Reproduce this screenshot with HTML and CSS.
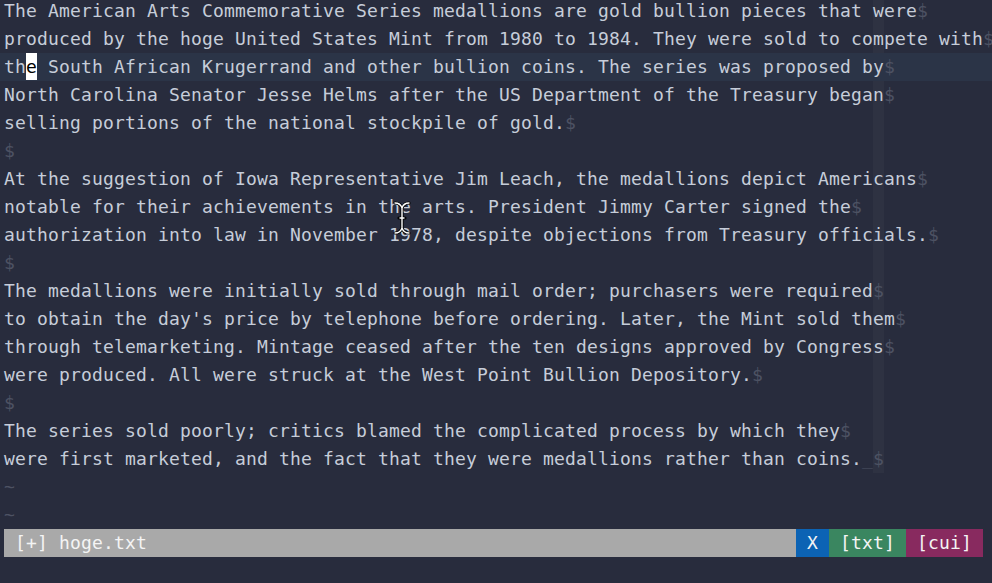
FILE: index.html
```html
<!DOCTYPE html>
<html>
<head>
<meta charset="utf-8">
<link rel="stylesheet" href="styles.css">
</head>
<body>
<div class="editor">
  <div class="buffer">
    <div class="line">The American Arts Commemorative Series medallions are gold bullion pieces that were<span class="nt">$</span></div>
    <div class="line">produced by the hoge United States Mint from 1980 to 1984. They were sold to compete with<span class="nt">$</span></div>
    <div class="line cursorline">th<span class="cursor">e</span> South African Krugerrand and other bullion coins. The series was proposed by<span class="nt">$</span></div>
    <div class="line">North Carolina Senator Jesse Helms after the US Department of the Treasury began<span class="nt">$</span></div>
    <div class="line">selling portions of the national stockpile of gold.<span class="nt">$</span></div>
    <div class="line"><span class="nt">$</span></div>
    <div class="line">At the suggestion of Iowa Representative Jim Leach, the medallions depict Americans<span class="nt">$</span></div>
    <div class="line">notable for their achievements in the arts. President Jimmy Carter signed the<span class="nt">$</span></div>
    <div class="line">authorization into law in November 1978, despite objections from Treasury officials.<span class="nt">$</span></div>
    <div class="line"><span class="nt">$</span></div>
    <div class="line">The medallions were initially sold through mail order; purchasers were required<span class="nt">$</span></div>
    <div class="line">to obtain the day's price by telephone before ordering. Later, the Mint sold them<span class="nt">$</span></div>
    <div class="line">through telemarketing. Mintage ceased after the ten designs approved by Congress<span class="nt">$</span></div>
    <div class="line">were produced. All were struck at the West Point Bullion Depository.<span class="nt">$</span></div>
    <div class="line"><span class="nt">$</span></div>
    <div class="line">The series sold poorly; critics blamed the complicated process by which they<span class="nt">$</span></div>
    <div class="line">were first marketed, and the fact that they were medallions rather than coins.<span class="nt">_$</span></div>
  </div>
  <div class="tilde">~</div>
  <div class="tilde">~</div>
  <div class="statusrow">
    <div class="status"><span class="fname"> [+] hoge.txt</span><span class="seg seg-x"> X </span><span class="seg seg-txt"> [txt] </span><span class="seg seg-cui"> [cui] </span></div>
  </div>
  <div class="cmdline"></div>
</div>
<svg class="ibeam" width="18" height="34" viewBox="0 0 18 34">
  <path d="M2 2 C6 2 8 4 9 7 C10 4 12 2 16 2 M9 7 L9 27 M2 32 C6 32 8 30 9 27 C10 30 12 32 16 32 M6 17 L12 17" fill="none" stroke="#000" stroke-width="3.2" stroke-linecap="round"/>
  <path d="M2 2 C6 2 8 4 9 7 C10 4 12 2 16 2 M9 7 L9 27 M2 32 C6 32 8 30 9 27 C10 30 12 32 16 32 M7 17 L11 17" fill="none" stroke="#fff" stroke-width="1.4" stroke-linecap="round"/>
</svg>
</body>
</html>
```

FILE: styles.css
```css
html, body {
  margin: 0;
  padding: 0;
  background: #282c3d;
  overflow: hidden;
}
body {
  width: 992px;
  height: 583px;
  position: relative;
}
.editor {
  margin-top: -3px;
  font-family: "DejaVu Sans Mono", monospace;
  font-size: 18px;
  letter-spacing: 0.163px;
  line-height: 28px;
  color: #c6cdd9;
}
.line, .tilde {
  height: 28px;
  padding-left: 4px;
  white-space: pre;
  overflow: hidden;
}
.statusrow {
  height: 28px;
  padding-left: 4px;
}
.line {
  background: linear-gradient(to right, transparent 873px, #2e3242 873px, #2e3242 884px, transparent 884px);
}
.line.cursorline {
  background: #2b3447;
}
.nt {
  color: #4d5263;
}
.cursor {
  background: #ffffff;
  color: #000000;
  display: inline-block;
  height: 27px;
  vertical-align: top;
}
.tilde {
  color: #4d5263;
}
.status {
  display: flex;
  width: 979px;
  height: 28px;
  color: #f4f4f4;
}
.status span {
  white-space: pre;
}
.fname {
  flex: 1;
  background: #a9a9a9;
}
.seg-x {
  background: #0c63b4;
}
.seg-txt {
  background: #3a8660;
}
.seg-cui {
  background: #882a5f;
}
.cmdline {
  height: 28px;
}
.ibeam {
  position: absolute;
  left: 393px;
  top: 201px;
}
```
